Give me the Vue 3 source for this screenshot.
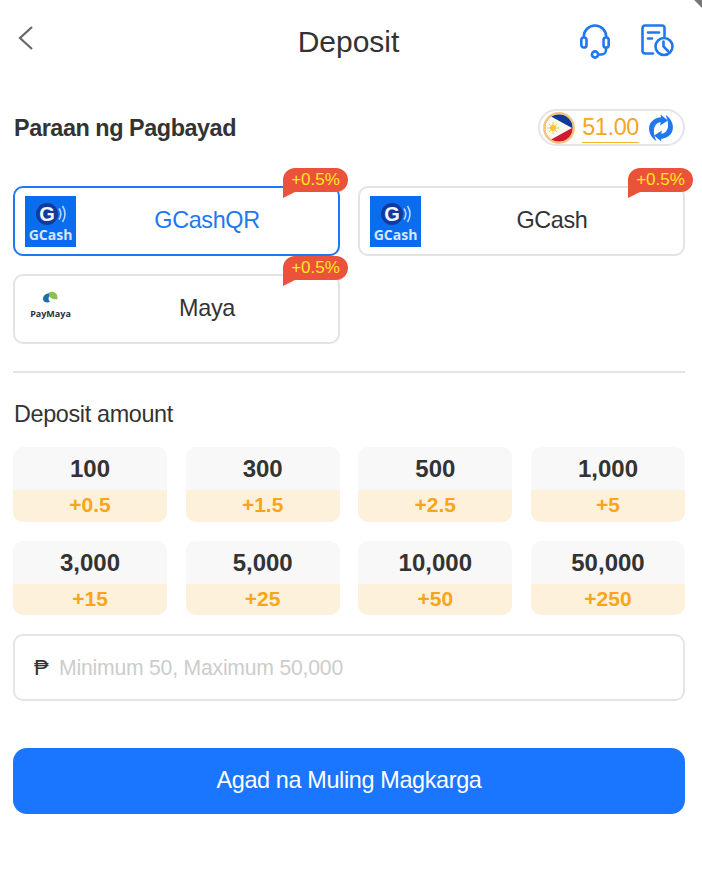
<template>
  <div class="deposit-page">
    <div class="corner"></div>

    <!-- Header -->
    <header class="top-bar">
      <div class="top-side">
        <svg class="back-icon" width="17" height="26" viewBox="0 0 17 26" fill="none">
          <path d="M15 2 L3 13 L15 24" stroke="#666" stroke-width="2.2" />
        </svg>
      </div>
      <h1 class="page-title">Deposit</h1>
      <div class="top-side top-actions">
        <svg width="30" height="35" viewBox="0 0 30 35" fill="none" stroke="#1f78f0" stroke-width="2.6">
          <path d="M3.8 14 V12.5 a11.2 11 0 0 1 22.4 0 V14" />
          <rect x="1.3" y="13.5" width="5.2" height="10" rx="2.6" />
          <rect x="23.5" y="13.5" width="5.2" height="10" rx="2.6" />
          <path d="M26 24 v2 a4.5 4.5 0 0 1 -4.5 4.5 h-3" />
          <circle cx="15" cy="30.5" r="3.1" />
        </svg>
        <svg width="33" height="33" viewBox="0 0 33 33" fill="none" stroke="#1f78f0" stroke-width="2.6" stroke-linecap="round">
          <path d="M12 29.5 H4 a2.5 2.5 0 0 1 -2.5 -2.5 V4 a2.5 2.5 0 0 1 2.5 -2.5 H21 a2.5 2.5 0 0 1 2.5 2.5 V12" />
          <path d="M7 8.5 H18" />
          <path d="M7 14.5 H11" />
          <circle cx="23" cy="22.5" r="8.5" />
          <path d="M22.5 17.5 V22.5 L27 27" />
        </svg>
      </div>
    </header>

    <!-- Payment method -->
    <section class="method-head">
      <h2 class="method-title">Paraan ng Pagbayad</h2>
      <div class="balance">
        <svg class="flag" width="32" height="32" viewBox="0 0 32 32">
          <defs>
            <clipPath id="flag-clip"><circle cx="16" cy="16" r="13.8" /></clipPath>
          </defs>
          <g clip-path="url(#flag-clip)">
            <rect width="32" height="16" fill="#123a94" />
            <rect y="16" width="32" height="16" fill="#d3182f" />
            <path d="M0 0 L29 16 L0 32 Z" fill="#fbf8ef" />
            <circle cx="10" cy="16" r="3" fill="#f5c33b" />
            <path d="M10 10 V22 M4 16 H16 M5.8 11.8 L14.2 20.2 M14.2 11.8 L5.8 20.2" stroke="#f5c33b" stroke-width="0.9" />
          </g>
          <circle cx="16" cy="16" r="14.8" fill="none" stroke="#f2c57c" stroke-width="2.2" />
        </svg>
        <span class="balance-amount">51.00</span>
        <svg width="28" height="28" viewBox="0 0 28 28" fill="#1f78f0">
          <path d="M9.5 27 C2 23 -1.5 11 7 5.5 C9.5 4 12 3.2 14 3.2 L13.5 0.5 L21 6.5 L13 11.5 L13.8 8.2 C8 8 4 16 9.5 27 Z" />
          <path d="M9.5 27 C2 23 -1.5 11 7 5.5 C9.5 4 12 3.2 14 3.2 L13.5 0.5 L21 6.5 L13 11.5 L13.8 8.2 C8 8 4 16 9.5 27 Z" transform="rotate(180 14 14)" />
        </svg>
      </div>
    </section>

    <div class="method-grid">
      <button
        v-for="m in methods"
        :key="m.name"
        class="method-card"
        :class="{ active: m.active }"
      >
        <span class="badge">+0.5%</span>
        <svg v-if="m.logo === 'gcash'" class="logo" width="51" height="51" viewBox="0 0 51 51">
          <rect width="51" height="51" fill="#0a6df0" />
          <circle cx="22" cy="18" r="11" fill="#123a9c" />
          <text x="22" y="25" text-anchor="middle" class="logo-g">G</text>
          <path d="M34 12.5 a10 10 0 0 1 0 11 M37.5 10 a14 14 0 0 1 0 16" fill="none" stroke="#b9d6ff" stroke-width="1.6" />
          <text x="25.5" y="44" text-anchor="middle" class="logo-gcash">GCash</text>
        </svg>
        <svg v-else class="logo" width="51" height="51" viewBox="0 0 51 51">
          <path d="M18 15 C18 10 24 8 28 10 C24 11 22 14 25 18 C21 19 18 18 18 15 Z" fill="#1d6f9e" />
          <path d="M24 8.5 C28 6.5 33 9 32.5 15 C28 16 23 14 24 8.5 Z" fill="#8cc152" />
          <text x="25.5" y="33" text-anchor="middle" class="logo-maya">PayMaya</text>
        </svg>
        <span class="method-name">{{ m.name }}</span>
      </button>
    </div>

    <div class="divider"></div>

    <!-- Amounts -->
    <div class="amount-label">Deposit amount</div>
    <div class="amount-grid">
      <div v-for="a in amounts" :key="a.value" class="amount-tile">
        <div class="amount-value">{{ a.value }}</div>
        <div class="amount-bonus">{{ a.bonus }}</div>
      </div>
    </div>

    <div class="amount-input">
      <span class="peso">₱</span>
      <input type="text" placeholder="Minimum 50, Maximum 50,000" />
    </div>

    <button class="submit-btn">Agad na Muling Magkarga</button>
  </div>
</template>

<script setup>
const methods = [
  { name: 'GCashQR', logo: 'gcash', active: true },
  { name: 'GCash', logo: 'gcash', active: false },
  { name: 'Maya', logo: 'maya', active: false }
]

const amounts = [
  { value: '100', bonus: '+0.5' },
  { value: '300', bonus: '+1.5' },
  { value: '500', bonus: '+2.5' },
  { value: '1,000', bonus: '+5' },
  { value: '3,000', bonus: '+15' },
  { value: '5,000', bonus: '+25' },
  { value: '10,000', bonus: '+50' },
  { value: '50,000', bonus: '+250' }
]
</script>

<style>
html,
body {
  background: #fff;
}
</style>

<style scoped>
.deposit-page {
  position: relative;
  box-sizing: border-box;
  height: 894px;
  padding: 0 17px 0 13px;
  overflow: hidden;
  font-family: "Liberation Sans", Arial, sans-serif;
  color: #333;
  background: #fff;
}

.corner {
  position: absolute;
  top: -8px;
  right: -8px;
  width: 14px;
  height: 14px;
  background: #777;
  transform: rotate(45deg);
}

.top-bar {
  display: flex;
  align-items: center;
  justify-content: space-between;
  height: 84px;
  padding: 0 11px 0 4px;
}

.top-side {
  width: 100px;
  display: flex;
}

.back-icon {
  margin-top: -8px;
}

.top-actions {
  justify-content: flex-end;
  gap: 31px;
  margin-top: -1px;
}

.page-title {
  margin: 0;
  font-size: 30px;
  font-weight: 400;
  line-height: 36px;
  color: #333;
  transform: translateX(3px);
}

.method-head {
  display: flex;
  align-items: center;
  justify-content: space-between;
  margin-top: 25px;
  width: 672px;
}

.method-title {
  margin: 0;
  margin-left: 1px;
  padding-top: 2px;
  font-size: 23.4px;
  letter-spacing: -0.45px;
  font-weight: 700;
  line-height: 35px;
}

.balance {
  box-sizing: border-box;
  display: flex;
  align-items: center;
  height: 37px;
  padding: 0 8px 0 3px;
  border: 2px solid #e5e5e5;
  border-radius: 19px;
}

.flag {
  margin-right: 7px;
}

.balance-amount {
  margin-right: 8px;
  font-size: 23.4px;
  letter-spacing: -0.35px;
  line-height: 29px;
  color: #f5a623;
  border-bottom: 1px solid #f5b731;
}

.method-grid {
  display: grid;
  grid-template-columns: repeat(2, 327px);
  column-gap: 18px;
  row-gap: 18px;
  width: 672px;
  margin-top: 40px;
}

.method-card {
  position: relative;
  box-sizing: border-box;
  display: flex;
  align-items: center;
  height: 70px;
  padding: 0 0 0 10px;
  background: #fff;
  border: 2px solid #e3e3e3;
  border-radius: 10px;
  font-family: inherit;
  color: #333;
}

.method-card.active {
  border-color: #1f78f0;
  color: #1f78f0;
}

.logo {
  flex: none;
}

.logo-g {
  font-size: 20px;
  font-weight: 700;
  fill: #f2f6ff;
}

.logo-gcash {
  font-family: "Open Sans", sans-serif;
  font-size: 14px;
  font-weight: 700;
  fill: #d5e6ff;
}

.logo-maya {
  font-family: "Open Sans", sans-serif;
  font-size: 9px;
  font-weight: 700;
  fill: #26323f;
}

.method-name {
  flex: 1;
  text-align: center;
  font-size: 23.4px;
  letter-spacing: -0.35px;
  line-height: 26px;
  margin-top: -2px;
}

.badge {
  position: absolute;
  top: -20px;
  right: -10px;
  width: 65px;
  height: 24px;
  font-size: 17px;
  line-height: 24px;
  text-align: center;
  color: #ffe81c;
  background: #ea533a;
  border-radius: 12px 12px 12px 0;
}

.badge::after {
  content: "";
  position: absolute;
  left: 0;
  top: 24px;
  border-top: 6px solid #ea533a;
  border-right: 12px solid transparent;
}

.divider {
  width: 672px;
  height: 2px;
  margin-top: 27px;
  background: #e5e5e5;
}

.amount-label {
  margin-top: 28px;
  margin-left: 1px;
  font-size: 23.4px;
  letter-spacing: -0.35px;
  line-height: 26px;
}

.amount-grid {
  display: grid;
  grid-template-columns: repeat(4, 154px);
  column-gap: 18.67px;
  row-gap: 19px;
  width: 672px;
  margin-top: 20px;
}

.amount-tile {
  height: 74.5px;
  border-radius: 10px;
  overflow: hidden;
  background: #f8f8f8;
  text-align: center;
  font-weight: 700;
}

.amount-value {
  height: 43px;
  font-size: 24px;
  line-height: 43px;
}

.amount-bonus {
  height: 32px;
  font-size: 21px;
  line-height: 30px;
  color: #f9a51a;
  background: #fef1dc;
}

.amount-input {
  box-sizing: border-box;
  display: flex;
  align-items: center;
  width: 672px;
  height: 67px;
  margin-top: 19px;
  padding-left: 19px;
  border: 2px solid #e5e5e5;
  border-radius: 10px;
}

.peso {
  width: 25px;
  flex: none;
  font-size: 22px;
  color: #333;
}

.amount-input input {
  flex: 1;
  min-width: 0;
  padding: 0;
  border: none;
  outline: none;
  font-family: inherit;
  font-size: 21.2px;
  letter-spacing: -0.22px;
  color: #333;
  background: transparent;
}

.amount-input input::placeholder {
  color: #ccc;
  opacity: 1;
}

.submit-btn {
  display: block;
  width: 672px;
  height: 66px;
  margin-top: 47px;
  padding: 0 0 1px;
  border: none;
  border-radius: 14px;
  font-family: inherit;
  font-size: 23.4px;
  letter-spacing: -0.35px;
  color: #fff;
  background: #1a76ff;
}
</style>
